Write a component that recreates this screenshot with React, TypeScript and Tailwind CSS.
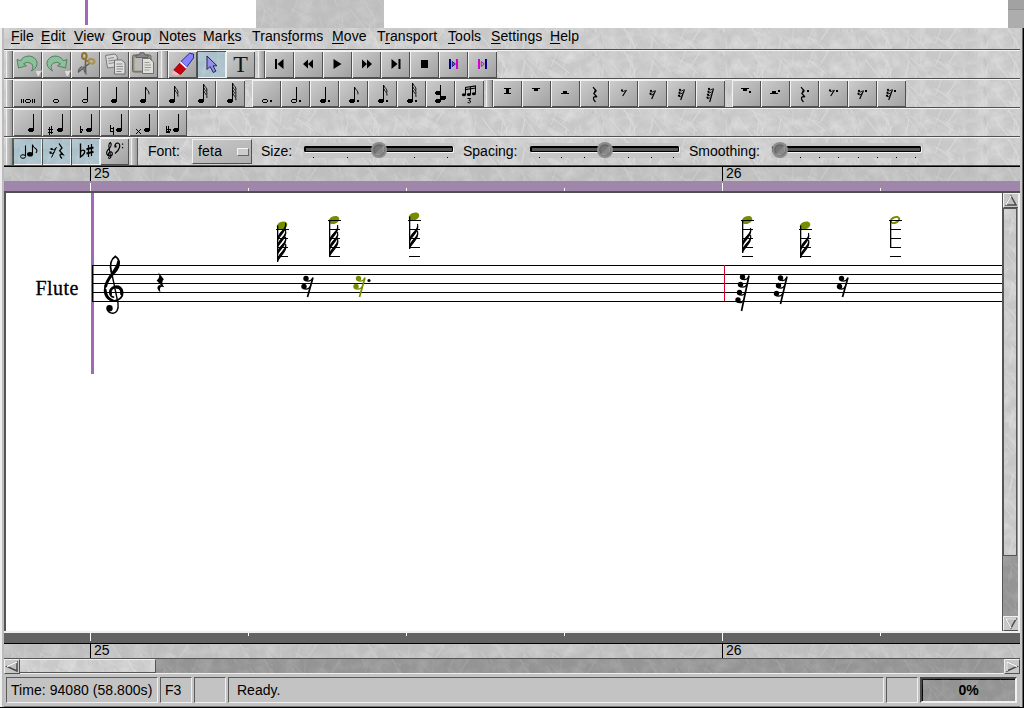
import { useId, type ReactNode } from "react";

const seeded = (seed: number) => () => {
  seed = (seed * 16807) % 2147483647;
  return seed / 2147483647;
};

const rand = seeded(77);
const SCRATCHES = Array.from({ length: 90 }, () => {
  const x = rand() * 128;
  const y = rand() * 74 - 14;
  const dx = (rand() - 0.35) * 34;
  const dy = 6 + rand() * 20;
  const b = (rand() - 0.5) * 8;
  return {
    d: `M${x.toFixed(1)} ${y.toFixed(1)}q${(dx / 2 + b).toFixed(1)} ${(dy / 2).toFixed(1)} ${dx.toFixed(1)} ${dy.toFixed(1)}`,
    light: rand() > 0.25,
    w: 0.5 + rand() * 0.8,
  };
});

function Texture({ strength = 0.36 }: { strength?: number }) {
  const id = useId().replace(/[^a-zA-Z0-9]/g, "");
  return (
    <svg className="absolute inset-0 -z-10 h-full w-full" opacity={strength} aria-hidden="true">
      <defs>
        <filter id={"n" + id} x="0" y="0" width="100%" height="100%">
          <feTurbulence type="fractalNoise" baseFrequency="0.07 0.09" numOctaves="4" seed="4" />
          <feColorMatrix values="0 0 0 0 1  0 0 0 0 1  0 0 0 0 1  1.8 0 0 0 -0.65" />
        </filter>
        <pattern id={"p" + id} width="128" height="64" patternUnits="userSpaceOnUse">
          {SCRATCHES.map((s, i) => (
            <path key={i} d={s.d} fill="none" stroke={s.light ? "#fff" : "#777"} strokeWidth={s.w} opacity={s.light ? 0.8 : 0.25} />
          ))}
        </pattern>
      </defs>
      <rect width="100%" height="100%" filter={`url(#n${id})`} />
      <rect width="100%" height="100%" fill={`url(#p${id})`} />
    </svg>
  );
}

/* ---------- toolbar glyphs, drawn in button coordinates (29 x 29) ---------- */

const Dot = ({ x, y = 22 }: { x: number; y?: number }) => <rect x={x} y={y - 1} width="2" height="2" />;

const Head = ({ x, y }: { x: number; y: number }) => <path transform={`translate(${x} ${y})`} d="M1 0h5v1h0v2h-1v1h-4v-1h-1v-2h1z" />;

const OpenHead = ({ x, y, w = 6 }: { x: number; y: number; w?: number }) => (
  <path fillRule="evenodd" transform={`translate(${x} ${y})`} d={`M1 0h${w - 2}v1h1v2h-1v1h-${w - 2}v-1h-1v-2h1zM1 1v2h${w - 2}v-2z`} />
);

function Note({ x = 0, open, stem = true, top = 8, flags = 0, dot }: { x?: number; open?: boolean; stem?: boolean; top?: number; flags?: number; dot?: boolean }) {
  return (
    <g transform={`translate(${x} 0)`}>
      {open ? <OpenHead x={11} y={20} /> : <Head x={11} y={20} />}
      {stem && <rect x="16" y={top} width="1" height={22 - top} />}
      {Array.from({ length: flags }, (_, i) => (
        <path key={i} shapeRendering="auto" d={`M17 ${top + 0.5 + i * 3.3}q.2 1.6 1.700 2.800t1.300 4`} fill="none" stroke="#000" strokeWidth=".9" />
      ))}
      {dot && <Dot x={19} />}
    </g>
  );
}

function SmallRest({ n, x = 0, dot }: { n: number; x?: number; dot?: boolean }) {
  const top = n === 1 ? 11 : n === 2 ? 11.5 : n === 3 ? 10.5 : 9.5;
  const bottom = n === 1 ? 17 : n === 2 ? 20 : n === 3 ? 21 : 23;
  return (
    <g transform={`translate(${x} 0)`}>
      <g shapeRendering="auto">
        <path d={`M17.500 ${top}L13.700 ${bottom}`} stroke="#000" strokeWidth="1.200" />
        {Array.from({ length: n }, (_, i) => (
          <g key={i}>
            <circle cx={13 - i * 0.5} cy={top + i * 2.9 + 0.3} r="1.100" />
            <path d={`M${12.500 - i * 0.5} ${top + i * 2.9 + 1}q2 1.200 ${4 - i * 0.4} -.6`} fill="none" stroke="#000" strokeWidth=".9" />
          </g>
        ))}
      </g>
      {dot && <Dot x={19} y={12} />}
    </g>
  );
}

const QuarterRest = ({ x = 0, dot }: { x?: number; dot?: boolean }) => (
  <g transform={`translate(${x} 0)`}>
    <g shapeRendering="auto">
      <path d="M13 8.200L16 11.500L13.800 14.500L17 18M17 18C12.500 17 12.500 20 15.500 23" fill="none" stroke="#000" strokeWidth="1.200" />
      <path d="M15 10.500l1.600 1.600-1.800 2.400-1-1z" />
    </g>
    {dot && <Dot x={19} y={12} />}
  </g>
);

const WholeRest = ({ x = 0, dot }: { x?: number; dot?: boolean }) => (
  <g transform={`translate(${x} 0)`}>
    <path d="M10 9h8v1h-2v2h-4v-2h-2z" />
    {dot && <Dot x={18} y={13} />}
  </g>
);

const HalfRest = ({ x = 0, dot }: { x?: number; dot?: boolean }) => (
  <g transform={`translate(${x} 0)`}>
    <path d="M10 15h8v-1h-2v-2h-4v2h-2z" />
    {dot && <Dot x={18} y={12} />}
  </g>
);

const Sharp = () => <path d="M7 19h1v8h-1zM9 18h1v8h-1zM6 21h5v1h-5zM6 24h5v1h-5z" />;
const FlatMark = ({ x = 0 }: { x?: number }) => (
  <path transform={`translate(${x} 0)`} d="M9 18h1v3h1v1h-1v2h1v1h-2zM11 21h1v2h-1zM11 23h0v1h-1v-1z" />
);

const TINY: Record<string, ReactNode> = {
  breve: (
    <>
      <path d="M8 20h1v4h-1zM10 20h1v4h-1zM19 20h1v4h-1zM21 20h1v4h-1z" />
      <OpenHead x={12} y={20} />
    </>
  ),
  whole: <OpenHead x={11} y={20} />,
  half: <Note open />,
  quarter: <Note />,
  eighth: <Note flags={1} />,
  n16: <Note flags={2} top={7} />,
  n32: <Note flags={3} top={5} />,
  n64: <Note flags={4} top={4} />,
  wholeD: <Note x={-1} open stem={false} dot />,
  halfD: <Note x={-1} open dot />,
  quarterD: <Note x={-1} dot />,
  eighthD: <Note x={-1} flags={1} dot />,
  n16D: <Note x={-1} flags={2} top={6} dot />,
  n32D: <Note x={-1} flags={3} top={4} dot />,
  chord: (
    <>
      <rect x="14" y="6" width="1" height="16" />
      <Head x={9} y={12} />
      <Head x={9} y={20} />
      <Head x={14} y={17} />
    </>
  ),
  rBreve: <path d="M11 9h7v1h-2v4h2v1h-7v-1h2v-4h-2z" />,
  rWhole: <WholeRest />,
  rHalf: <HalfRest />,
  rQuarter: <QuarterRest />,
  r8: <SmallRest n={1} />,
  r16: <SmallRest n={2} />,
  r32: <SmallRest n={3} />,
  r64: <SmallRest n={4} />,
  rWholeD: <WholeRest x={-1} dot />,
  rHalfD: <HalfRest x={-1} dot />,
  rQuarterD: <QuarterRest x={-2} dot />,
  r8D: <SmallRest x={-2} n={1} dot />,
  r16D: <SmallRest x={-2} n={2} dot />,
  r32D: <SmallRest x={-2} n={3} dot />,
  aNone: <Note x={4} top={6} />,
  aSharp: <><Sharp /><Note x={4} top={6} /></>,
  aFlat: <><FlatMark /><Note x={4} top={6} /></>,
  aNatural: <><path d="M10 17h1v7h-1zM13 19h1v8h-1zM11 20h2v1h-2zM11 23h2v1h-2z" /><Note x={5} top={6} /></>,
  aDouble: <><path d="M7 21h1v1h1v1h1v-1h1v-1h1v1h-1v1h-1v1h1v1h1v1h-1v-1h-1v-1h-1v1h-1v1h-1v-1h1v-1h1v-1h-1v-1h-1z" /><Note x={4} top={6} /></>,
  aFlatFlat: <><FlatMark x={-1} /><FlatMark x={1} /><Note x={4} top={6} /></>,
  stop: <rect x="11" y="10" width="7" height="8" />,
};

const SMOOTH: Record<string, ReactNode> = {
  first: <path d="M10 9h2v10h-2zM18.500 9v10l-6-5z" />,
  rew: <path d="M14 9.500v9l-5-4.500zM19 9.500v9l-5-4.500z" />,
  play: <path d="M10.500 9l8 5-8 5z" />,
  fwd: <path d="M10 9.500v9l5-4.500zM15 9.500v9l5-4.500z" />,
  last: <path d="M17.500 9h2v10h-2zM10.500 9v10l6-5z" />,
  loopIn: (
    <>
      <path d="M10 9h2v10h-2z" fill="#000080" />
      <path d="M17 9h2v10h-2z" fill="#d000d0" />
      <path d="M13.300 11.500l3 2.500-3 2.500z" fill="#5070c0" stroke="#000080" strokeWidth=".8" />
    </>
  ),
  loopOut: (
    <>
      <path d="M10 9h2v10h-2z" fill="#d000d0" />
      <path d="M17 9h2v10h-2z" fill="#000080" />
      <path d="M13.300 11.500l3 2.500-3 2.500z" fill="#d0a0c8" stroke="#b000a0" strokeWidth=".8" />
    </>
  ),
  triplet: (
    <>
      <path d="M10.500 15.500V8.500M15.500 15.500V8M20.500 14.500V7" fill="none" stroke="#000" />
      <path d="M10 8.500L21 6.800M10 10.700L21 9" fill="none" stroke="#000" strokeWidth="1.200" />
      <ellipse cx="8.900" cy="15.700" rx="2" ry="1.500" />
      <ellipse cx="13.900" cy="15.500" rx="2" ry="1.500" />
      <ellipse cx="18.900" cy="14.700" rx="2" ry="1.500" />
      <path d="M12.500 19.500h3.200l-1.700 2q2 .1 1.600 1.600-1 1.400-3 .3" fill="none" stroke="#000" />
    </>
  ),
  undo: (
    <>
      <path d="M4 9.500l1.500 8.500 8-2.200-3-2q3.500-3 7.500-.5 3.500 3 .5 7.700 7.500-4.500 5-10.300Q20 4.500 12.500 6.500 9 7.700 7.700 10.800z" fill="#8cc09a" stroke="#4a7a5a" strokeWidth=".9" />
      <path d="M22 20.500h7l-3 6h-1.500z" fill="#dcdcdc" stroke="#999" strokeWidth=".6" />
    </>
  ),
  redo: (
    <>
      <path d="M25 9.500l-1.500 8.500-8-2.200 3-2q-3.500-3-7.500-.5-3.500 3-.5 7.700Q3 16.500 5.500 10.700 9 4.500 16.500 6.500q3.500 1.200 4.800 4.300z" fill="#8cc09a" stroke="#4a7a5a" strokeWidth=".9" />
      <path d="M22 20.500h7l-3 6h-1.500z" fill="#dcdcdc" stroke="#999" strokeWidth=".6" />
    </>
  ),
  cut: (
    <>
      <path d="M14.500 10l.3 13.500q-1.800-2-2.300-6.500M19 13L7.500 22q-.5-3 3.500-5.500" fill="#999" stroke="#606060" strokeWidth="1.400" />
      <ellipse cx="13.300" cy="6" rx="2.300" ry="3" fill="none" stroke="#8d7435" strokeWidth="2" />
      <ellipse cx="20.500" cy="11.300" rx="3" ry="2.200" fill="none" stroke="#a8924c" strokeWidth="2" transform="rotate(20 20.500 11.300)" />
      <path d="M14 9.500l3 2" stroke="#8d7435" strokeWidth="2" />
    </>
  ),
  copy: (
    <>
      <path d="M5.500 5.500l9.500-1.500 2 2 1.500 10.500-11 1.500z" fill="#d8d8d8" stroke="#707070" strokeWidth=".9" />
      <path d="M8 8.500l6-.9M8.300 11l6-.9M8.600 13.500l6-.9" stroke="#888" />
      <path d="M14.500 10h7l3.500 3v11H14.500z" fill="#dedede" stroke="#666" strokeWidth=".9" />
      <path d="M16.500 14h6M16.500 16.500h6.500M16.500 19h6.500M16.500 21.500h5" stroke="#888" />
    </>
  ),
  paste: (
    <>
      <rect x="3.500" y="5" width="18.500" height="17" rx="1.500" fill="#9a9078" stroke="#69645a" />
      <rect x="5.500" y="7.500" width="14.500" height="13" fill="#b9b9b9" />
      <path d="M7 7.500V5h3l1-2.300h4L16 5h3v2.500z" fill="#888" stroke="#555" strokeWidth=".8" />
      <path d="M13.500 8.500h7l4 3.500v11.500h-11z" fill="#e0dfda" stroke="#666" strokeWidth=".9" />
      <path d="M15.500 12.500h5M15.500 15h6.500M15.500 17.500h6.500M15.500 20h5" stroke="#999" />
    </>
  ),
  erase: (
    <>
      <path d="M13 11.500L21.500 3.200 25.500 4v4L18.700 17z" fill="#8583ff" stroke="#1b1b90" strokeWidth=".9" />
      <path d="M5.500 20.300L12 13l6 5.500-5.500 6z" fill="#c80010" stroke="#70000c" strokeWidth=".8" />
      <path d="M5.300 20l6.200 4.700-3.500.6-4-1.300z" fill="#ffb4b4" />
      <path d="M12.500 12.300l5.900 5.600" stroke="#fff" strokeWidth="1.600" />
    </>
  ),
  arrow: <path d="M10 6v13.500l3-3 3.300 6 2.500-1.300-2.800-5.400h4z" fill="#9691e6" stroke="#222060" strokeWidth="1" />,
  showNotes: (
    <>
      <ellipse cx="10" cy="19.500" rx="2.500" ry="1.800" fill="none" stroke="#000" />
      <path d="M12.500 19V8.500M19.500 17V7.500q.5 2.500 3 4t.5 4.500" fill="none" stroke="#000" strokeWidth="1.100" />
      <ellipse cx="17" cy="17.300" rx="3" ry="2.300" />
    </>
  ),
  showRests: (
    <>
      <path d="M14.500 10l-5 10.500M9 12.300q3 1.500 5-1M8 16q2.500 1.300 4.500-.8" fill="none" stroke="#000" />
      <path d="M8.500 11h2v2h-2zM7.500 14.500h2v2h-2z" />
      <path d="M17 6.500l3 4.500-2.300 2.700L21 17.500q-4-1-2.700 1.500.5 1.500 1.700 2.500" fill="none" stroke="#000" strokeWidth="1.300" />
    </>
  ),
  showAcc: (
    <>
      <path d="M9.500 6.500V20q5-3.500 4-6.300-1.800-1.500-4 .8" fill="none" stroke="#000" strokeWidth="1.400" />
      <path d="M17.500 8v12M20.500 7v12" stroke="#000" strokeWidth="1.200" />
      <path d="M15.500 12.200l7-1.700M15.500 16.500l7-1.700" stroke="#000" strokeWidth="2" />
    </>
  ),
  showClefs: (
    <>
      <path d="M10.500 21q-2 1-2-.8M10.800 21L8.800 9q.2-3 1.500-3.500 2 2-.5 5.500-4 3.500-3 6 1 2.500 3.500 2t2-3q-1-2-3-.5t0 3" fill="none" stroke="#000" strokeWidth="1.100" />
      <path d="M15 9.500q0-3.500 2.500-3.500 3 .5 2 4.500-1 3.500-4.500 6" fill="none" stroke="#000" strokeWidth="1.200" />
      <path d="M14.500 8.500h2v2h-2zM22 6.500h1.200v1.200h-1.200zM22 10h1.200v1.200h-1.200z" />
    </>
  ),
};

function ToolButton({ icon, on }: { icon: string; on?: boolean }) {
  return (
    <button
      aria-label={icon}
      className={
        on
          ? "relative isolate block h-[27px] w-[29px] shrink-0 bg-[#a9c0ca] shadow-[inset_1px_1px_0_#454545,inset_-1px_-1px_0_#efefef]"
          : "block h-[27px] w-[29px] shrink-0 bg-gradient-to-br from-[#cecece] to-[#a0a0a0] shadow-[inset_1px_1px_0_#f2f2f2,inset_-1px_-1px_0_#505050]"
      }
    >
      {on && <Texture strength={0.2} />}
      {icon === "text" ? (
        <span className="block text-center font-['Liberation_Serif',serif] text-[24px] leading-[27px] text-[#151515]">T</span>
      ) : (
        <svg width="29" height="27" viewBox="0 1 29 27" shapeRendering={TINY[icon] ? "crispEdges" : "auto"}>
          {TINY[icon] ?? SMOOTH[icon]}
        </svg>
      )}
    </button>
  );
}

const Buttons = ({ names, on = [] }: { names: string[]; on?: string[] }) => (
  <div className="flex">
    {names.map((n) => (
      <ToolButton key={n} icon={n} on={on.includes(n)} />
    ))}
  </div>
);

const Handle = ({ className = "" }: { className?: string }) => (
  <div className={`h-[27px] w-[7px] shrink-0 border-l border-r border-l-[#eee] border-r-[#5a5a5a] bg-gradient-to-r from-[#c9c9c9] to-[#9c9c9c] ${className}`} />
);

const Row = ({ children }: { children: ReactNode }) => (
  <div className="relative isolate flex h-[29px] items-stretch overflow-hidden border-t border-b border-t-[#f2f2f2] border-b-[#505050] bg-[#c8c8c8] pl-[2px]">
    <Texture />
    {children}
  </div>
);

/* ------------------------------- menu bar ------------------------------- */

const MENUS: [string, string, string, string][] = [
  ["", "F", "ile", "w-[30px]"],
  ["", "E", "dit", "w-[33px]"],
  ["", "V", "iew", "w-[38px]"],
  ["", "G", "roup", "w-[47px]"],
  ["", "N", "otes", "w-[44px]"],
  ["Mar", "k", "s", "w-[49px]"],
  ["Trans", "f", "orms", "w-[80px]"],
  ["", "M", "ove", "w-[45px]"],
  ["T", "r", "ansport", "w-[71px]"],
  ["", "T", "ools", "w-[43px]"],
  ["", "S", "ettings", "w-[59px]"],
  ["", "H", "elp", "w-[40px]"],
];

/* -------------------------------- sliders ------------------------------- */

function Slider({ knob, ticks }: { knob: number; ticks: number[] }) {
  return (
    <svg width="152" height="27" viewBox="0 0 152 27" className="shrink-0">
      <rect x="0" y="5" width="152" height="15" fill="#c6c6c6" />
      <rect x="1" y="8" width="149" height="6" rx="1.500" fill="#000" />
      <rect x="3" y="10" width="146" height="3" fill="#565656" />
      <path d="M2 14.500h148.500V9" fill="none" stroke="#f4f4f4" />
      {ticks.map((t) => (
        <rect key={t} x={t} y="19" width="1" height="1" />
      ))}
      <circle cx={knob} cy="12" r="8" fill="#8b8b8b" />
      <circle cx={knob} cy="12" r="5.800" fill="#626262" />
      <path d={`M${knob - 4} 16a5.700 5.700 0 0 0 8 -8z`} fill="#a2a2a2" />
      <circle cx={knob} cy="12" r="4.600" fill="#7e7e7e" opacity=".7" />
    </svg>
  );
}

/* -------------------------------- rulers -------------------------------- */

function RulerLabels() {
  return (
    <div className="relative isolate flex h-[14px] bg-[#bebebe] pl-[86px] text-[14px] leading-[13px]">
      <Texture strength={0.25} />
      <div className="w-[632px] shrink-0 border-l border-black pl-[3px]">25</div>
      <div className="w-[200px] shrink-0 border-l border-black pl-[3px]">26</div>
    </div>
  );
}

function RulerBand({ bottom }: { bottom?: boolean }) {
  return (
    <div className={bottom ? "flex h-[10px] items-start bg-[#636363] pl-[86px]" : "flex h-[10px] items-end bg-[#a086aa] pl-[86px]"}>
      {[0, 1, 2, 3, 4, 5].map((i) => (
        <div key={i} className="w-[158px] shrink-0">
          <div className={i % 4 === 0 ? "h-[8px] w-px bg-white" : "h-[3px] w-px bg-white"} />
        </div>
      ))}
    </div>
  );
}

/* --------------------------------- score -------------------------------- */

const LEDGERS = [220, 229, 238, 247, 256];

function ScoreNote({ x, y, end, flags, open }: { x: number; y: number; end: number; flags: number; open?: boolean }) {
  return (
    <g>
      <ellipse cx={x + 5} cy={y} rx={open ? 4.4 : 5.5} ry={open ? 2.7 : 3.8} transform={`rotate(-22 ${x + 5} ${y})`} fill={open ? "none" : "#788c00"} stroke={open ? "#788c00" : "none"} strokeWidth="2" />
      {LEDGERS.filter((l) => l >= y - 1).map((l) => (
        <rect key={l} x={l - y < 5 ? x - 1 : x} y={l} width={l - y < 5 ? 13 : 11} height="1" />
      ))}
      <rect x={x} y={y} width="1.300" height={end - y} />
      {Array.from({ length: flags }, (_, i) => {
        const b = end - 1 - i * 7;
        return <path key={i} d={`M${x + 0.5} ${b}C${x + 1} ${b - 9} ${x + 10.5} ${b - 10} ${x + 8.5} ${b - 17}C${x + 10.5} ${b - 10} ${x + 3.5} ${b - 6} ${x + 0.5} ${b}z`} stroke="#000" strokeWidth="1.150" />;
      })}
    </g>
  );
}

function ScoreRest({ stem, blobs, color = "#000" }: { stem: [number, number, number, number]; blobs: [number, number][]; color?: string }) {
  const [x1, y1, x2, y2] = stem;
  return (
    <g fill={color} stroke="none">
      <path d={`M${x1} ${y1}L${x2} ${y2}`} stroke={color} strokeWidth="1.700" />
      {blobs.map(([bx, by]) => {
        const sx = x1 + ((by + 1 - y1) / (y2 - y1)) * (x2 - x1);
        return (
          <g key={by}>
            <circle cx={bx} cy={by} r="2.700" />
            <path d={`M${bx - 1} ${by + 2}Q${(bx + sx) / 2 + 1} ${by + 4} ${sx} ${by}`} fill="none" stroke={color} strokeWidth="1.300" />
          </g>
        );
      })}
    </g>
  );
}

function Clef() {
  return (
    <g fill="none" stroke="#000" strokeLinecap="round">
      <path d="M111.300 272C109.300 263 112 258.500 115.300 256.500" strokeWidth="1.700" />
      <path d="M111.300 271L118 303C119 310 116 313.600 112.500 313.200C109.500 313 108 311.500 107.500 309.500" strokeWidth="1.400" />
      <path d="M115.300 256.500C120 259 120.300 265.500 116.500 270.500C112.500 276 104.500 281 104.600 290.500C104.800 297.500 109.500 301.300 114.500 300.800C120 300.300 123 296.500 122.700 292.300C122.300 288 119 285.800 115.500 286.300C110.500 287 108.500 291.500 110.300 294.800C111 296.200 112 297 113.500 297.200" strokeWidth="1.700" />
      <path d="M118.500 262C117.800 270 107.500 276.500 105.800 286" strokeWidth="2.900" />
      <path d="M105.700 290C106 296 109 299 113 300.300" strokeWidth="1.900" />
      <path d="M116.500 287.300C120.500 287.300 122 290 121.500 294" strokeWidth="2.800" />
      <path d="M114.500 287.500C110.800 288.500 109.800 291.500 110.900 294" strokeWidth="2.300" />
      <circle cx="109.500" cy="308.300" r="3.200" fill="#000" stroke="none" />
    </g>
  );
}

function Score() {
  return (
    <svg width="996" height="438" viewBox="6 193 996 438" className="block shrink-0 bg-white">
      <rect x="91" y="193" width="3" height="181" fill="#a069b9" />
      {[265, 274, 283, 292, 301].map((y) => (
        <rect key={y} x="92" y={y} width="910" height="1" />
      ))}
      <rect x="92" y="265" width="1" height="37" />
      <rect x="724" y="265" width="1" height="36" fill="#d0002a" />
      <text x="35.500" y="295" fontSize="20" textLength="43" className="font-['Liberation_Serif',serif]" stroke="#000" strokeWidth=".3">Flute</text>
      <Clef />
      <path d="M158.300 272.300L163.800 279.200Q160.500 282.500 164.300 287.300Q158.500 285.200 160.500 292.500Q155.500 288 158.500 285.500Q159.800 284.800 161.300 285.400L156.600 280.600Q160.800 277.500 158.300 272.300z" />
      <ScoreNote x={277} y={225.5} end={262} flags={4} />
      <ScoreNote x={329} y={220} end={257} flags={3} />
      <ScoreNote x={409} y={216.5} end={249} flags={2} />
      <ScoreNote x={742} y={220} end={253} flags={2} />
      <ScoreNote x={800} y={225.5} end={258} flags={2} />
      <ScoreNote x={890} y={220} end={248} flags={0} open />
      <ScoreRest stem={[313, 277.5, 307.5, 297]} blobs={[[306, 278.5], [304, 286.5]]} />
      <ScoreRest color="#788c00" stem={[365, 277.5, 359.5, 297]} blobs={[[358.5, 278.5], [356, 286.5]]} />
      <circle cx="369" cy="280.500" r="1.600" />
      <ScoreRest stem={[749, 275.5, 741.5, 311]} blobs={[[742.5, 277], [740.5, 284.5], [739.5, 292.5], [738, 300]]} />
      <ScoreRest stem={[787, 276.5, 780.5, 304]} blobs={[[780.5, 278], [778.5, 285.5], [776.5, 293.5]]} />
      <ScoreRest stem={[848, 277.5, 842.5, 297]} blobs={[[841.5, 278.5], [839.5, 286.5]]} />
    </svg>
  );
}

const ArrowBox = ({ d, hi }: { d: string; hi: string }) => (
  <div className="h-[15px] w-[16px] shrink-0 border border-t-[#f0f0f0] border-r-[#505050] border-b-[#505050] border-l-[#f0f0f0] bg-[#c8c8c8]">
    <svg width="14" height="13" viewBox="0 0 14 13" className="block">
      <path d={d} fill="#c0c0c0" stroke="#4a4a4a" strokeWidth="1.500" />
      <path d={hi} fill="none" stroke="#f6f6f6" strokeWidth="1.500" />
    </svg>
  </div>
);

const cell = "h-[26px] shrink-0 border border-t-[#5a5a5a] border-l-[#5a5a5a] border-b-[#f0f0f0] border-r-[#f0f0f0] leading-[24px]";

export default function App() {
  return (
    <div className="flex h-[708px] w-[1024px] flex-col overflow-hidden bg-white font-['Liberation_Sans',Arial,sans-serif] text-[14px] text-black">
      <div className="flex h-[28px] shrink-0">
        <div className="w-[85px]" />
        <div className="h-[25px] w-[3px] bg-[#a069b9]" />
        <div className="w-[168px]" />
        <div className="relative isolate w-[128px] bg-[#bebebe]"><Texture strength={0.2} /></div>
        <div className="w-[624px]" />
        <div className="w-[16px] bg-[#adadad]"><div className="h-[10px] border-b border-[#929292] bg-[#a2a2a2]" /></div>
      </div>

      <div className="flex h-[680px] shrink-0 border-r border-b border-black bg-[#c3c3c3]">
        <div className="w-[4px] shrink-0 border-r-2 border-l border-l-[#eee] border-r-[#bcbcbc] bg-[#eee]" />
        <div className="flex w-[1016px] shrink-0 flex-col">
          <nav className="relative isolate flex h-[22px] shrink-0 border-b border-[#505050] bg-[#c8c8c8] pl-[7px] leading-[16px]">
            <Texture />
            {MENUS.map(([a, u, b, w]) => (
              <span key={a + u + b} className={`${w} shrink-0 whitespace-nowrap tracking-[0.1px]`}>
                {a}
                <span className="underline decoration-1 underline-offset-2">{u}</span>
                {b}
              </span>
            ))}
          </nav>

          <Row>
            <Handle />
            <Buttons names={["undo", "redo", "cut", "copy", "paste"]} />
            <Handle className="ml-[3px]" />
            <Buttons names={["erase", "arrow", "text"]} on={["arrow"]} />
            <Handle className="ml-[3px]" />
            <Buttons names={["first", "rew", "play", "fwd", "last", "stop", "loopIn", "loopOut"]} />
          </Row>
          <Row>
            <Handle />
            <Buttons names={["breve", "whole", "half", "quarter", "eighth", "n16", "n32", "n64"]} />
            <div className="w-[7px] shrink-0" />
            <Buttons names={["wholeD", "halfD", "quarterD", "eighthD", "n16D", "n32D", "chord", "triplet"]} />
            <Handle className="ml-[2px]" />
            <Buttons names={["rBreve", "rWhole", "rHalf", "rQuarter", "r8", "r16", "r32", "r64"]} />
            <div className="w-[7px] shrink-0" />
            <Buttons names={["rWholeD", "rHalfD", "rQuarterD", "r8D", "r16D", "r32D"]} />
          </Row>
          <Row>
            <Handle />
            <Buttons names={["aNone", "aSharp", "aFlat", "aNatural", "aDouble", "aFlatFlat"]} />
          </Row>
          <Row>
            <Handle />
            <Buttons names={["showNotes", "showRests", "showAcc", "showClefs"]} on={["showNotes", "showRests", "showAcc"]} />
            <Handle className="ml-[2px]" />
            <span className="w-[54px] shrink-0 pl-[10px] leading-[26px]">Font:</span>
            <div className="mt-[1px] flex h-[25px] w-[60px] shrink-0 items-center justify-between border border-t-[#f0f0f0] border-r-[#505050] border-b-[#505050] border-l-[#f0f0f0] bg-gradient-to-br from-[#c8c8c8] to-[#b0b0b0] pr-[2px] pl-[5px]">
              <span className="tracking-[0.2px]">feta</span>
              <span className="h-[8px] w-[12px] border border-t-[#f4f4f4] border-r-[#666] border-b-[#666] border-l-[#f4f4f4] bg-[#ccc]" />
            </div>
            <span className="w-[51px] shrink-0 pl-[9px] leading-[26px]">Size:</span>
            <Slider knob={76} ticks={[10, 44, 111, 144]} />
            <span className="w-[74px] shrink-0 pl-[8px] leading-[26px]">Spacing:</span>
            <Slider knob={76} ticks={[10, 32, 55, 99, 122, 144]} />
            <span className="w-[90px] shrink-0 pl-[8px] leading-[26px]">Smoothing:</span>
            <Slider knob={9} ticks={[29, 48, 67, 87, 106, 125, 144]} />
          </Row>
          <div className="h-px shrink-0 bg-black" />

          <RulerLabels />
          <RulerBand />
          <div className="h-[2px] shrink-0 bg-[#505050]" />
          <div className="flex h-[438px] shrink-0">
            <div className="w-[2px] shrink-0 bg-[#555]" />
            <Score />
            <div className="flex w-[16px] shrink-0 flex-col border-l border-[#555] bg-[#999]">
              <ArrowBox d="M7 2L12 11H2z" hi="M7 2L2 11" />
              <div className="relative isolate h-[348px] w-[14px] border border-[#555] bg-[#c6c6c6]"><Texture /></div>
              <div className="relative isolate w-[15px] flex-1 bg-[#949494]"><Texture strength={0.16} /></div>
              <ArrowBox d="M7 11L12 2H2z" hi="M12 2H2L7 11" />
            </div>
            <div className="w-[2px] shrink-0 bg-[#f0f0f0]" />
          </div>
          <div className="h-[2px] shrink-0 bg-[#f0f0f0]" />
          <RulerBand bottom />
          <div className="h-px shrink-0 bg-black" />
          <RulerLabels />

          <div className="flex h-[16px] shrink-0 border-t border-b border-t-[#555] border-b-[#f0f0f0] bg-[#949494]">
            <ArrowBox d="M2 6.500L12 2V11z" hi="M2 6.500L12 2" />
            <div className="relative isolate w-[136px] shrink-0 border-t border-r border-b border-t-[#f0f0f0] border-r-[#555] border-b-[#555] bg-[#cacaca]"><Texture /></div>
            <div className="relative isolate w-[848px] shrink-0"><Texture strength={0.16} /></div>
            <ArrowBox d="M12 6.500L2 2V11z" hi="M12 6.500L2 2V11" />
          </div>

          <div className="flex flex-1 gap-[2px] pt-[3px] pl-[2px]">
            <div className={`${cell} w-[152px] pl-[4px] whitespace-nowrap tracking-[0.05px]`}>Time: 94080 (58.800s)</div>
            <div className={`${cell} w-[32px] pl-[4px]`}>F3</div>
            <div className={`${cell} w-[32px]`} />
            <div className={`${cell} w-[656px] pl-[8px]`}>Ready.</div>
            <div className={`${cell} w-[32px]`} />
            <div className="relative isolate h-[26px] w-[97px] shrink-0 border-2 border-t-[#4a4a4a] border-r-[#f0f0f0] border-b-[#f0f0f0] border-l-[#4a4a4a] bg-[#939393] text-center leading-[22px] font-bold shadow-[inset_1px_1px_0_#000]">
              <Texture strength={0.15} />
              0%
            </div>
          </div>
          <div className="h-px shrink-0 bg-[#777]" />
        </div>
        <div className="w-[3px] shrink-0 border-r border-[#666] bg-[#c8c8c8]" />
      </div>
    </div>
  );
}
